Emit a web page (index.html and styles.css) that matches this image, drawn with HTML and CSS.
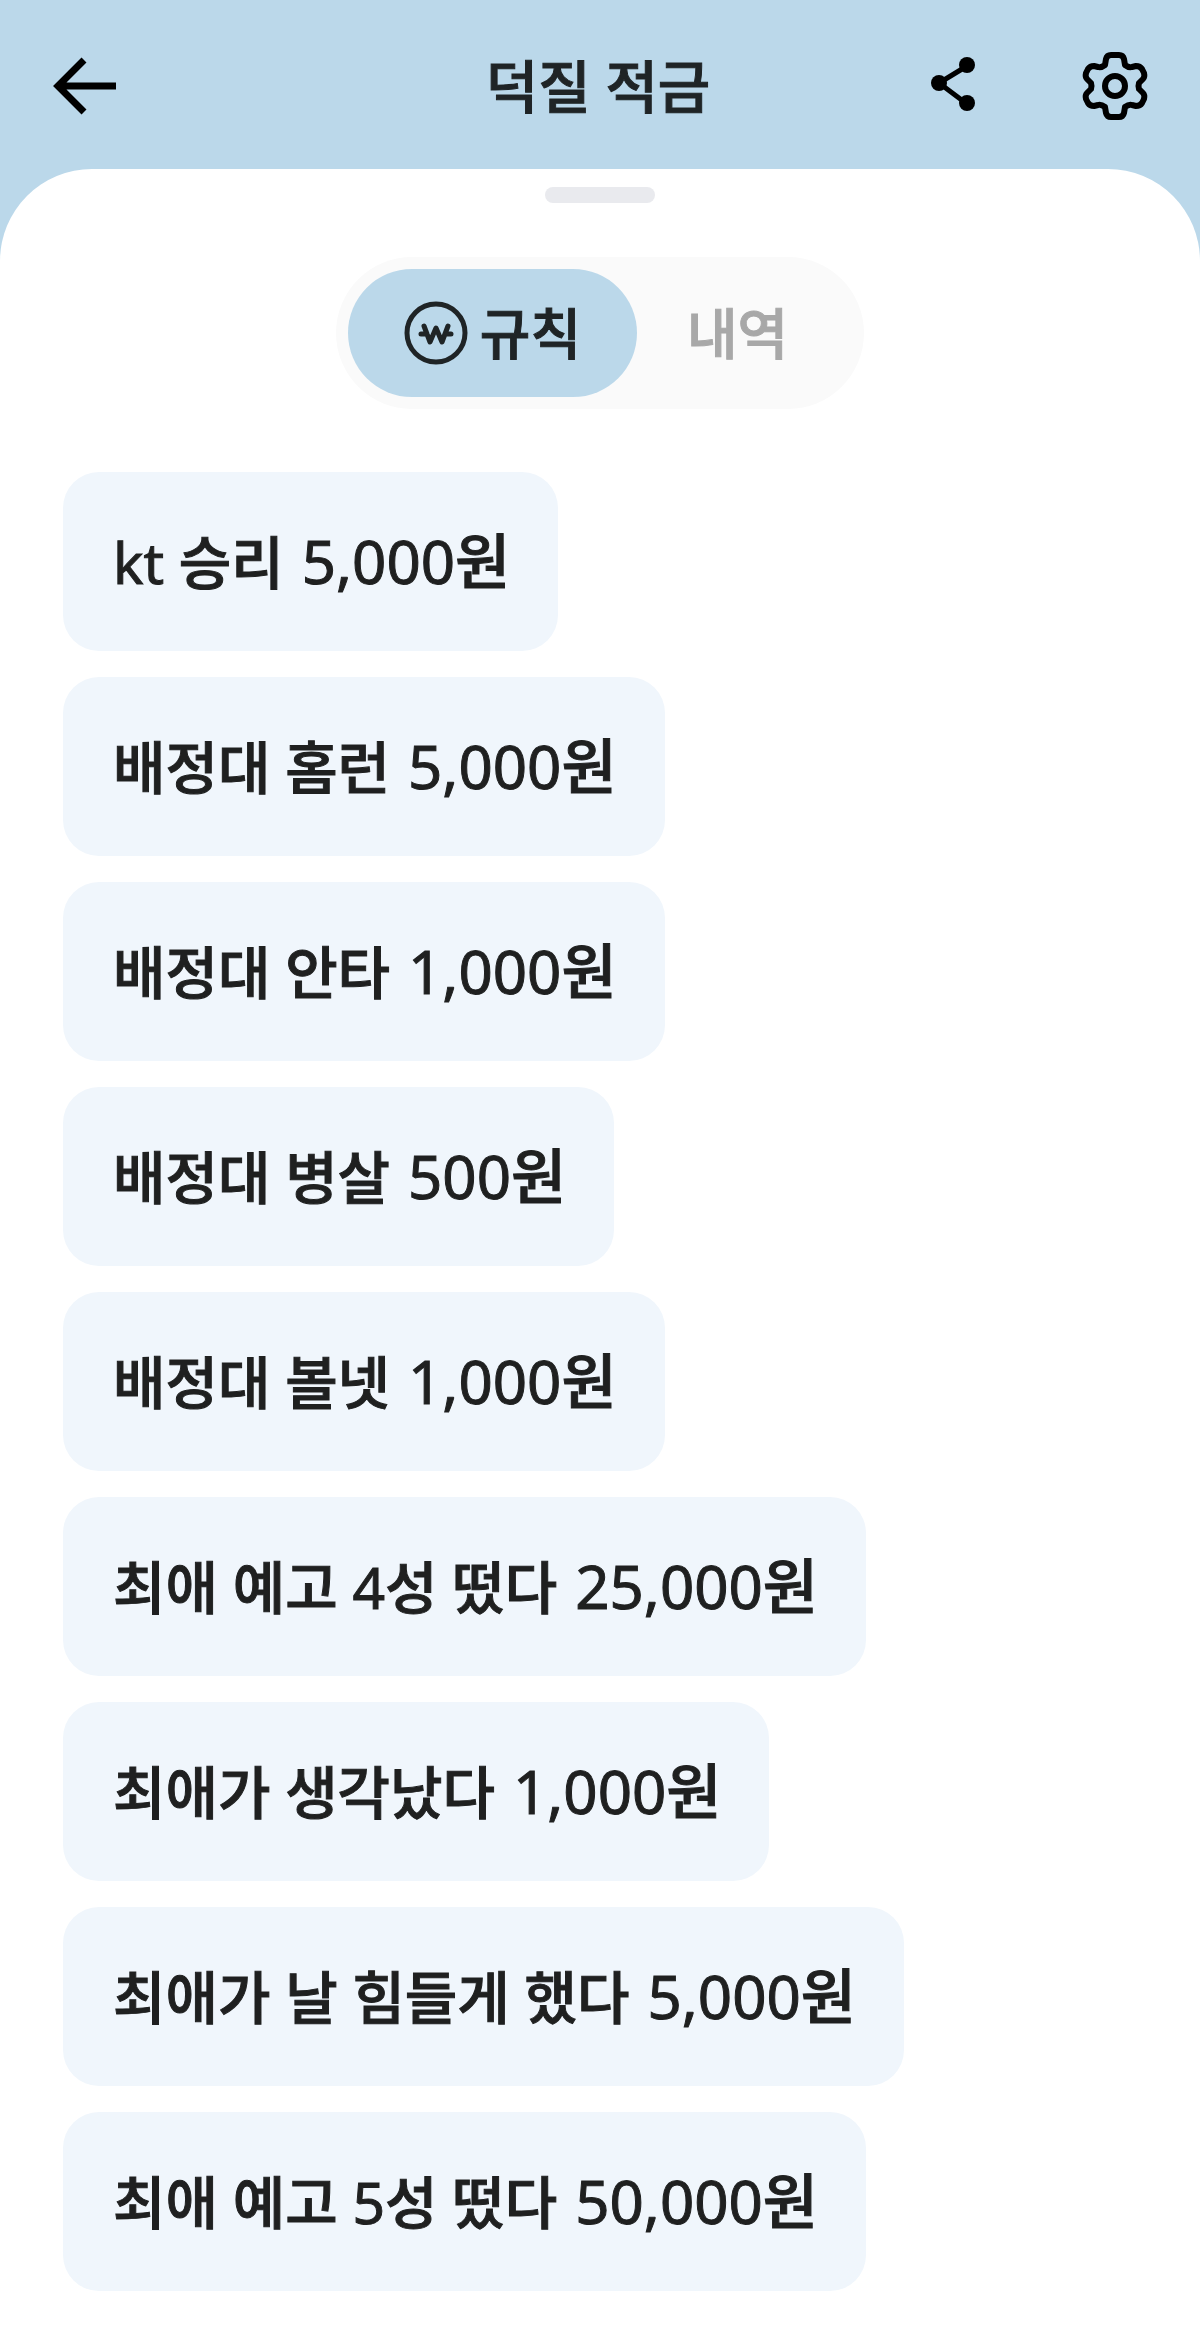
FILE: index.html
```
<!DOCTYPE html>
<html lang="ko">
<head>
    <meta charset="UTF-8">
    <meta name="viewport" content="width=device-width, initial-scale=1.0">
    <title>덕질 적금</title>
    <link rel="stylesheet" href="styles.css">
</head>
<body>
    <header class="top-bar">
        <div class="bar-side">
            <button class="icon-btn" type="button" aria-label="뒤로">
                <svg width="72" height="72" viewBox="0 0 72 72" fill="none" stroke="#000" stroke-width="7">
                    <path d="M72 36H13M40 10L14 36L40 62"/>
                </svg>
            </button>
        </div>
        <h1>덕질 적금</h1>
        <div class="bar-side bar-right">
            <button class="icon-btn" type="button" aria-label="공유">
                <svg width="72" height="72" viewBox="0 0 72 72" fill="#000" stroke="#000" stroke-width="5">
                    <path d="M47 16L19 33L47 54" fill="none"/>
                    <g stroke="none">
                        <circle cx="47" cy="15" r="8"/>
                        <circle cx="19" cy="33" r="8"/>
                        <circle cx="47" cy="53" r="8"/>
                    </g>
                </svg>
            </button>
            <button class="icon-btn" type="button" aria-label="설정">
                <svg width="72" height="72" viewBox="-35 -36 72 72" fill="none" stroke="#000" stroke-width="6" stroke-linejoin="round">
                    <path d="M-4 -31H4Q8 -31 9 -27L10 -21Q14 -18 17 -19L21 -20Q25 -20 27 -17L29 -13Q30 -9 28 -7L24 -3Q23 0 24 3L28 7Q30 9 29 13L27 17Q25 20 21 20L17 19Q14 18 10 21L9 27Q8 31 4 31H-4Q-8 31 -9 27L-10 21Q-14 18 -17 19L-21 20Q-25 20 -27 17L-29 13Q-30 9 -28 7L-24 3Q-23 0 -24 -3L-28 -7Q-30 -9 -29 -13L-27 -17Q-25 -20 -21 -20L-17 -19Q-14 -18 -10 -21L-9 -27Q-8 -31 -4 -31Z"/>
                    <circle r="10"/>
                </svg>
            </button>
        </div>
    </header>

    <main class="sheet">
        <div class="handle"></div>
        <div class="tabs" role="tablist">
            <button class="tab active" type="button" role="tab" aria-selected="true">
                <svg width="64" height="64" viewBox="0 0 64 64" fill="none" stroke="#1f2426" stroke-width="5" stroke-linecap="round" stroke-linejoin="round">
                    <circle cx="32" cy="32" r="29"/>
                    <path d="M20 25L26 41L32 27L38 41L44 25M17 33H23M41 33H47"/>
                </svg>
                규칙
            </button>
            <button class="tab" type="button" role="tab" aria-selected="false">내역</button>
        </div>

        <ul class="rules">
            <li class="rule"><span><span class="latin">kt</span> 승리</span><span class="amount"><span class="latin">5,000</span>원</span></li>
            <li class="rule"><span>배정대 홈런</span><span class="amount"><span class="latin">5,000</span>원</span></li>
            <li class="rule"><span>배정대 안타</span><span class="amount"><span class="latin">1,000</span>원</span></li>
            <li class="rule"><span>배정대 병살</span><span class="amount"><span class="latin">500</span>원</span></li>
            <li class="rule"><span>배정대 볼넷</span><span class="amount"><span class="latin">1,000</span>원</span></li>
            <li class="rule"><span>최애 예고 <span class="latin">4</span>성 떴다</span><span class="amount"><span class="latin">25,000</span>원</span></li>
            <li class="rule"><span>최애가 생각났다</span><span class="amount"><span class="latin">1,000</span>원</span></li>
            <li class="rule"><span>최애가 날 힘들게 했다</span><span class="amount"><span class="latin">5,000</span>원</span></li>
            <li class="rule"><span>최애 예고 <span class="latin">5</span>성 떴다</span><span class="amount"><span class="latin">50,000</span>원</span></li>
        </ul>
    </main>
</body>
</html>
```
FILE: styles.css
```
* {
    box-sizing: border-box;
}

body {
    margin: 0;
    min-height: 100vh;
    display: flex;
    flex-direction: column;
    background-color: #bbd8ea;
    color: #1f2020;
    font-family: "Noto Sans", "Noto Sans CJK KR", sans-serif;
    font-weight: 500;
    -webkit-text-stroke: 1px currentColor;
}

button {
    border: none;
    background: none;
    padding: 0;
    font-family: inherit;
    font-weight: inherit;
    color: inherit;
    cursor: pointer;
}

.top-bar {
    display: flex;
    align-items: center;
    padding: 50px 48px 47px 44px;
}

.bar-side {
    flex: 1;
    display: flex;
}

.bar-right {
    justify-content: flex-end;
    gap: 88px;
}

h1 {
    margin: 0;
    font-size: 57px;
    line-height: 72px;
    font-weight: 500;
    color: #1f2426;
}

.icon-btn,
.icon-btn svg {
    display: block;
}

.sheet {
    flex: 1;
    display: flex;
    flex-direction: column;
    align-items: center;
    padding: 18px 63px 52px;
    background-color: #fff;
    border-radius: 92px 92px 0 0;
}

.handle {
    width: 110px;
    height: 16px;
    border-radius: 8px;
    background-color: #e9eaee;
}

.tabs {
    display: flex;
    margin-top: 54px;
    padding: 12px;
    border-radius: 76px;
    background-color: #fafafa;
}

.tab {
    display: flex;
    align-items: center;
    gap: 12px;
    height: 128px;
    padding: 0 64px 0 50px;
    border-radius: 64px;
    font-size: 55px;
    line-height: 64px;
    color: #a8a8a8;
}

.tab.active {
    padding: 0 56px;
    background-color: #bbd8ea;
    color: #1f2426;
}

.rules {
    align-self: stretch;
    display: flex;
    flex-direction: column;
    align-items: flex-start;
    gap: 26px;
    margin: 63px 0 0;
    padding: 0;
    list-style: none;
}

.rule {
    display: flex;
    align-items: baseline;
    gap: 18px;
    padding: 49px 48px 49px 50px;
    border-radius: 36px;
    background-color: #f0f6fc;
    font-size: 57px;
    line-height: 80px;
    white-space: nowrap;
}

.amount {
    font-size: 60px;
}

.latin {
    font-weight: 400;
}
```
